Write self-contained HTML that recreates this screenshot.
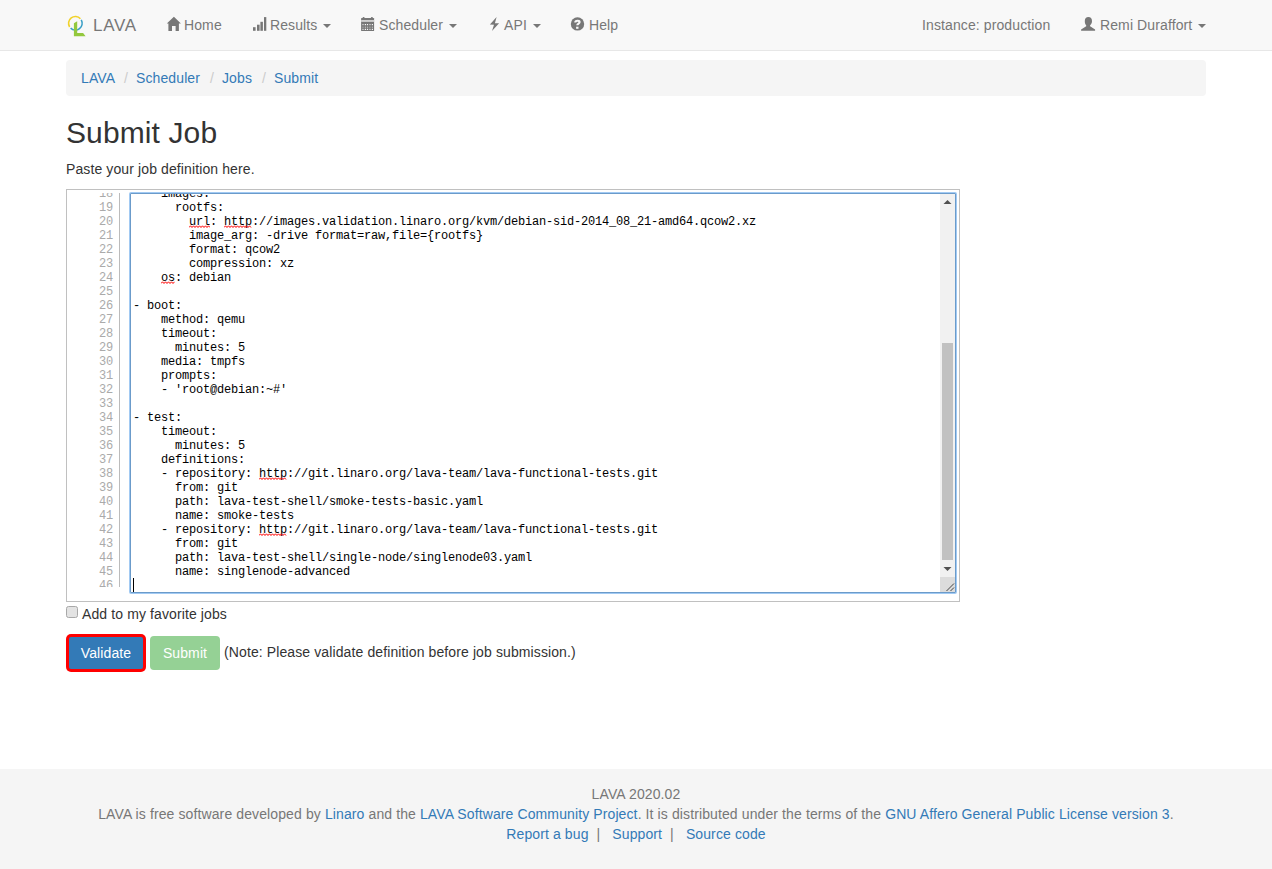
<!DOCTYPE html>
<html><head><meta charset="utf-8"><title>LAVA Submit Job</title>
<style>
*{box-sizing:border-box}
html,body{margin:0;padding:0}
body{width:1272px;height:869px;position:relative;overflow:hidden;background:#fff;color:#333;font-family:"Liberation Sans",sans-serif;font-size:14px;line-height:20px;letter-spacing:0.11px}
a{color:#337ab7;text-decoration:none}
.abs{position:absolute}
.nav{position:absolute;left:0;top:0;width:1272px;height:51px;background:#f8f8f8;border-bottom:1px solid #e7e7e7}
.ni{position:absolute;top:0;height:50px;line-height:50px;color:#777;white-space:nowrap}
.ni svg{position:absolute}
.caret{display:inline-block;width:0;height:0;border-top:4px solid #777;border-left:4px solid transparent;border-right:4px solid transparent;vertical-align:middle}
.bc{position:absolute;left:66px;top:60px;width:1140px;height:36px;background:#f5f5f5;border-radius:4px;padding:8px 15px;line-height:20px;letter-spacing:0}
.bc .sep{color:#ccc;padding:0 5px}
h1{position:absolute;left:66px;top:116px;margin:0;font-size:30px;font-weight:500;line-height:33px;color:#333}
.lead{position:absolute;left:66px;top:159px}
.box{position:absolute;left:66px;top:189px;width:894px;height:413px;border:1px solid #c0c0c0;background:#fff}
.gut{position:absolute;left:67px;top:193px;width:53px;height:394px;overflow:hidden;border-right:1px solid #bbb}
.gut pre{margin:0;position:absolute;right:6px;top:-6px;letter-spacing:-0.2px;text-align:right;color:#aaa;font-family:"Liberation Mono",monospace;font-size:12px;line-height:14px}
.ta{position:absolute;left:130px;top:193px;width:826px;height:400px;border:1px solid #6b9bca;box-shadow:0 0 0 1px #a2caf3;border-radius:1px;overflow:hidden;background:#fff}
.ta pre{margin:0;position:absolute;left:2px;top:-7px;letter-spacing:-0.2px;color:#000;font-family:"Liberation Mono",monospace;font-size:12px;line-height:14px}
.sq{position:absolute;height:3px}
.sb{position:absolute;left:809px;top:0;width:15px;height:398px;background:#f1f1f1}
.footer{position:absolute;left:0;top:769px;width:1272px;height:100px;background:#f5f5f5;color:#777;text-align:center;padding-top:15px}
</style></head><body>
<div class="nav">
  <!-- logo -->
  <svg class="abs" style="left:66px;top:14px" width="22" height="24" viewBox="0 0 22 24">
    <path d="M3.64 12.96 A6.8 6.8 0 0 1 14.39 4.71" fill="none" stroke="#f1d22a" stroke-width="1.6"/>
    <path d="M15.23 5.86 A6.8 6.8 0 0 1 4.62 14.15" fill="none" stroke="#3a9fc6" stroke-width="1.6"/>
    <path d="M7.9 9.3 L11.2 7.3 L11.2 18.9 L17.1 18.9 L19.6 22.2 L7.9 22.2 Z" fill="#93c83d"/>
  </svg>
  <div class="ni" style="left:93px;top:1px;font-size:17px;letter-spacing:0.7px">LAVA</div>
  <!-- home -->
  <svg class="abs" style="left:166px;top:16px" width="15" height="15" viewBox="0 0 15 15"><path d="M7.9 0.8 L14.9 7.6 L12.9 7.6 L12.9 15 L9.6 15 L9.6 10.1 L6 10.1 L6 15 L2.4 15 L2.4 7.6 L0.8 7.6 Z" fill="#777"/></svg>
  <div class="ni" style="left:184px">Home</div>
  <!-- signal -->
  <svg class="abs" style="left:252px;top:16px" width="16" height="16" viewBox="0 0 16 16"><rect x="1" y="11.2" width="2.6" height="3.6" fill="#777"/><rect x="5" y="8.7" width="2.6" height="6.1" fill="#777"/><rect x="8.4" y="5.8" width="2.5" height="9" fill="#777"/><rect x="12" y="1.1" width="2.3" height="13.7" fill="#777"/></svg>
  <div class="ni" style="left:270px">Results <span class="caret" style="margin-left:2px"></span></div>
  <!-- calendar -->
  <svg class="abs" style="left:360px;top:16px" width="16" height="16" viewBox="0 0 16 16"><rect x="1.1" y="1.9" width="13" height="13.1" rx="0.6" fill="#777"/><rect x="2.6" y="0.9" width="2" height="2" rx="0.9" fill="#777"/><rect x="10.9" y="0.9" width="2" height="2" rx="0.9" fill="#777"/><rect x="1.1" y="4.0" width="13" height="1.9" fill="#cfcfcf"/><rect x="4.8" y="8.0" width="1.2" height="1.2" fill="#f8f8f8" fill-opacity="1"/><rect x="6.9" y="8.0" width="1.2" height="1.2" fill="#f8f8f8" fill-opacity="1"/><rect x="11.8" y="8.0" width="1.2" height="1.2" fill="#f8f8f8" fill-opacity="1"/><rect x="2.0" y="8.0" width="2" height="1.2" fill="#f8f8f8" fill-opacity="0.5"/><rect x="9.0" y="8.0" width="2" height="1.2" fill="#f8f8f8" fill-opacity="0.5"/><rect x="4.8" y="10.6" width="1.2" height="1.2" fill="#f8f8f8" fill-opacity="0.55"/><rect x="6.9" y="10.6" width="1.2" height="1.2" fill="#f8f8f8" fill-opacity="0.55"/><rect x="11.8" y="10.6" width="1.2" height="1.2" fill="#f8f8f8" fill-opacity="0.55"/><rect x="2.0" y="10.6" width="2" height="1.2" fill="#f8f8f8" fill-opacity="0.275"/><rect x="9.0" y="10.6" width="2" height="1.2" fill="#f8f8f8" fill-opacity="0.275"/><rect x="4.8" y="12.8" width="1.2" height="1.2" fill="#f8f8f8" fill-opacity="1"/><rect x="6.9" y="12.8" width="1.2" height="1.2" fill="#f8f8f8" fill-opacity="1"/><rect x="11.8" y="12.8" width="1.2" height="1.2" fill="#f8f8f8" fill-opacity="1"/><rect x="2.0" y="12.8" width="2" height="1.2" fill="#f8f8f8" fill-opacity="0.5"/><rect x="9.0" y="12.8" width="2" height="1.2" fill="#f8f8f8" fill-opacity="0.5"/></svg>
  <div class="ni" style="left:379px">Scheduler <span class="caret" style="margin-left:2px"></span></div>
  <!-- bolt -->
  <svg class="abs" style="left:489px;top:16px" width="11" height="16" viewBox="0 0 11 16"><path d="M7.6 1.0 L5.9 7.2 L10.1 7.2 L3.0 15.0 L5.0 8.7 L0.9 8.5 Z" fill="#777"/></svg>
  <div class="ni" style="left:504px">API <span class="caret" style="margin-left:2px"></span></div>
  <!-- help -->
  <svg class="abs" style="left:570px;top:16px" width="16" height="16" viewBox="0 0 16 16"><circle cx="7.5" cy="7.9" r="6.7" fill="#777"/><path d="M5.3 6.4 C5.3 4.3 9.6 4.1 9.6 6.1 C9.6 7.5 7.3 7.6 7.3 9.2" fill="none" stroke="#f8f8f8" stroke-width="2.1"/><rect x="6.1" y="10.7" width="2.4" height="2.1" fill="#f8f8f8"/></svg>
  <div class="ni" style="left:589px">Help</div>
  <div class="ni" style="left:922px">Instance: production</div>
  <!-- user -->
  <svg class="abs" style="left:1080px;top:16px" width="16" height="16" viewBox="0 0 16 16"><path d="M8.4 1 C10.6 1 12.0 2.6 12.0 5 C12.0 7 11.2 8.4 10.1 9.2 L10.1 10.2 L15.1 13.6 L15.1 14.8 L1.1 14.8 L1.1 13.6 L6.2 10.2 L6.2 9.2 C5.2 8.4 4.8 7 4.8 5 C4.8 2.6 6.2 1 8.4 1 Z" fill="#777"/></svg>
  <div class="ni" style="left:1100px">Remi Duraffort <span class="caret" style="margin-left:2px"></span></div>
</div>

<div class="bc"></div>
<div class="abs" style="left:81px;top:68px;color:#337ab7">LAVA</div>
<div class="abs" style="left:124px;top:68px;color:#ccc">/</div>
<div class="abs" style="left:136px;top:68px;color:#337ab7">Scheduler</div>
<div class="abs" style="left:210px;top:68px;color:#ccc">/</div>
<div class="abs" style="left:222px;top:68px;color:#337ab7">Jobs</div>
<div class="abs" style="left:262px;top:68px;color:#ccc">/</div>
<div class="abs" style="left:274px;top:68px;color:#337ab7">Submit</div>

<h1>Submit Job</h1>
<div class="lead">Paste your job definition here.</div>

<div class="box"></div>
<div class="gut"><pre>18
19
20
21
22
23
24
25
26
27
28
29
30
31
32
33
34
35
36
37
38
39
40
41
42
43
44
45
46
47</pre></div>
<div class="ta"><pre>    images:
      rootfs:
        url: http://images.validation.linaro.org/kvm/debian-sid-2014_08_21-amd64.qcow2.xz
        image_arg: -drive format=raw,file={rootfs}
        format: qcow2
        compression: xz
    os: debian

- boot:
    method: qemu
    timeout:
      minutes: 5
    media: tmpfs
    prompts:
    - 'root@debian:~#'

- test:
    timeout:
      minutes: 5
    definitions:
    - repository: http://git.linaro.org/lava-team/lava-functional-tests.git
      from: git
      path: lava-test-shell/smoke-tests-basic.yaml
      name: smoke-tests
    - repository: http://git.linaro.org/lava-team/lava-functional-tests.git
      from: git
      path: lava-test-shell/single-node/singlenode03.yaml
      name: singlenode-advanced
</pre>
  <div class="abs" style="left:2px;top:384px;width:1px;height:14px;background:#000"></div>
  <div class="sb">
    <svg class="abs" style="left:0;top:0" width="15" height="15"><path d="M3.5 10 L7.5 6 L11.5 10 Z" fill="#505050"/></svg>
    <div class="abs" style="left:2px;top:149px;width:11px;height:217px;background:#c1c1c1"></div>
    <svg class="abs" style="left:0;top:368px" width="15" height="15"><path d="M3.5 5 L7.5 9 L11.5 5 Z" fill="#505050"/></svg>
    <div class="abs" style="left:0;top:383px;width:15px;height:15px;background:#dcdcdc"></div>
    <svg class="abs" style="left:0;top:383px" width="15" height="15"><path d="M6.5 14 L14 6.5 M10.5 14 L14 10.5" stroke="#444" stroke-width="1"/></svg>
  </div>
</div>

<svg class="abs" style="left:189px;top:225px" width="21" height="3"><polyline points="0.0,2.5 1.5,0.8 3.0,2.5 4.5,0.8 6.0,2.5 7.5,0.8 9.0,2.5 10.5,0.8 12.0,2.5 13.5,0.8 15.0,2.5 16.5,0.8 18.0,2.5 19.5,0.8 21.0,2.5" fill="none" stroke="#f00" stroke-width="1"/></svg>
<svg class="abs" style="left:224px;top:225px" width="28" height="3"><polyline points="0.0,2.5 1.5,0.8 3.0,2.5 4.5,0.8 6.0,2.5 7.5,0.8 9.0,2.5 10.5,0.8 12.0,2.5 13.5,0.8 15.0,2.5 16.5,0.8 18.0,2.5 19.5,0.8 21.0,2.5 22.5,0.8 24.0,2.5 25.5,0.8 27.0,2.5" fill="none" stroke="#f00" stroke-width="1"/></svg>
<svg class="abs" style="left:161px;top:281px" width="14" height="3"><polyline points="0.0,2.5 1.5,0.8 3.0,2.5 4.5,0.8 6.0,2.5 7.5,0.8 9.0,2.5 10.5,0.8 12.0,2.5 13.5,0.8" fill="none" stroke="#f00" stroke-width="1"/></svg>
<svg class="abs" style="left:259px;top:477px" width="28" height="3"><polyline points="0.0,2.5 1.5,0.8 3.0,2.5 4.5,0.8 6.0,2.5 7.5,0.8 9.0,2.5 10.5,0.8 12.0,2.5 13.5,0.8 15.0,2.5 16.5,0.8 18.0,2.5 19.5,0.8 21.0,2.5 22.5,0.8 24.0,2.5 25.5,0.8 27.0,2.5" fill="none" stroke="#f00" stroke-width="1"/></svg>
<svg class="abs" style="left:259px;top:533px" width="28" height="3"><polyline points="0.0,2.5 1.5,0.8 3.0,2.5 4.5,0.8 6.0,2.5 7.5,0.8 9.0,2.5 10.5,0.8 12.0,2.5 13.5,0.8 15.0,2.5 16.5,0.8 18.0,2.5 19.5,0.8 21.0,2.5 22.5,0.8 24.0,2.5 25.5,0.8 27.0,2.5" fill="none" stroke="#f00" stroke-width="1"/></svg>
<div class="abs" style="left:66px;top:606px;width:12px;height:12px;border:1px solid #a8a8a8;border-radius:2.5px;background:#e3e3e3"></div>
<div class="abs" style="left:82px;top:604px">Add to my favorite jobs</div>

<div class="abs" style="left:66px;top:634px;width:80px;height:38px;background:#f00;border-radius:5px"></div>
<div class="abs" style="left:69px;top:637px;width:74px;height:32px;background:#337ab7;border-radius:2px;color:#fff;text-align:center;line-height:32px">Validate</div>
<div class="abs" style="left:150px;top:636px;width:70px;height:34px;background:#95d195;border-radius:4px;color:#fff;text-align:center;line-height:34px">Submit</div>
<div class="abs" style="left:224px;top:642px">(Note: Please validate definition before job submission.)</div>

<div class="footer">
  <div>LAVA 2020.02</div>
  <div>LAVA is free software developed by <a>Linaro</a> and the <a>LAVA Software Community Project</a>. It is distributed under the terms of the <a>GNU Affero General Public License version 3</a>.</div>
  <div><a>Report a bug</a> &nbsp;|&nbsp; &nbsp;<a>Support</a> &nbsp;|&nbsp; &nbsp;<a>Source code</a></div>
</div>
</body></html>
